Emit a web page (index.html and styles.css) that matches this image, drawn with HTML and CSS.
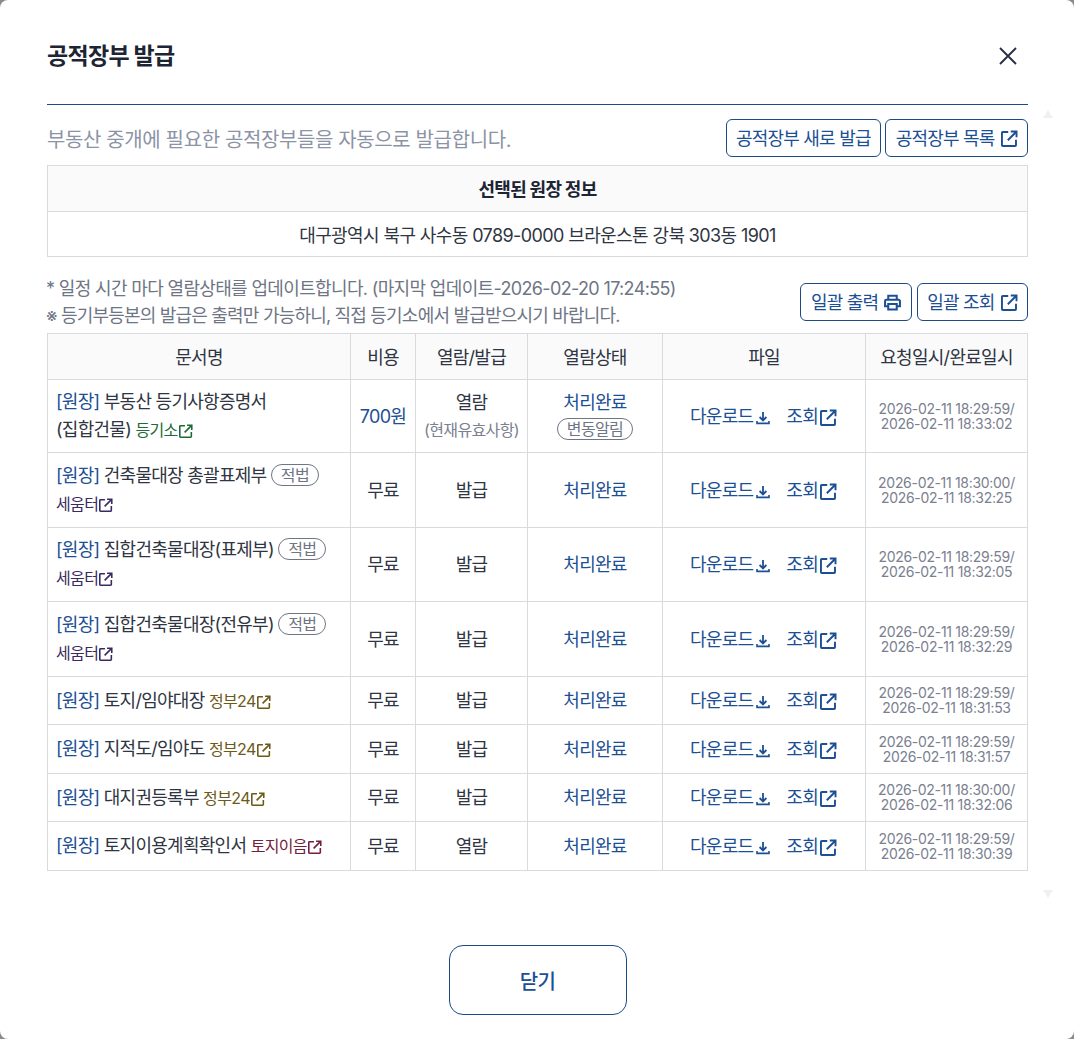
FILE: index.html
```html
<!DOCTYPE html>
<html lang="ko">
<head>
<meta charset="utf-8">
<title>공적장부 발급</title>
<link rel="stylesheet" href="styles.css">
</head>
<body>
<svg class="defs" width="0" height="0" aria-hidden="true">
  <symbol id="ext" viewBox="0 0 16 16">
    <path d="M6.8 1.9H1.7a.8.8 0 0 0-.8.8v11.6a.8.8 0 0 0 .8.8h11.6a.8.8 0 0 0 .8-.8V9.2" fill="none" stroke="currentColor" stroke-width="1.8"/>
    <path d="M6.4 9.6 14.4 1.6M9.2 1.4h5.4v5.4" fill="none" stroke="currentColor" stroke-width="1.8"/>
  </symbol>
  <symbol id="down" viewBox="0 0 14 14">
    <path d="M7 1v8M3.6 6 7 9.4 10.4 6" fill="none" stroke="currentColor" stroke-width="1.8"/>
    <path d="M1 10v2.4h12V10" fill="none" stroke="currentColor" stroke-width="1.6"/>
  </symbol>
  <symbol id="print" viewBox="0 0 16 16">
    <path d="M4 5.5V1.6h8v3.9" fill="none" stroke="currentColor" stroke-width="1.9"/>
    <path d="M4 11.6H1V6.6a1.2 1.2 0 0 1 1.2-1.2h11.6a1.2 1.2 0 0 1 1.2 1.2v5H12" fill="none" stroke="currentColor" stroke-width="1.9"/>
    <path d="M4 9.4h8v5.2H4z" fill="none" stroke="currentColor" stroke-width="1.9"/>
  </symbol>
</svg>

<div class="modal">
  <header class="modal-head">
    <h1 class="modal-title">공적장부 발급</h1>
    <button class="close" type="button" aria-label="닫기">
      <svg width="20" height="20" viewBox="0 0 20 20"><path d="M2 2l16 16M18 2 2 18" fill="none" stroke="currentColor" stroke-width="1.9"/></svg>
    </button>
  </header>

  <div class="modal-body">
    <span class="scroll-arrow up"></span>
    <span class="scroll-arrow down"></span>

    <div class="intro">
      <p class="intro-text">부동산 중개에 필요한 공적장부들을 자동으로 발급합니다.</p>
      <div class="btns">
        <button class="btn" type="button">공적장부 새로 발급</button>
        <button class="btn" type="button">공적장부 목록 <svg class="i-btn"><use href="#ext"/></svg></button>
      </div>
    </div>

    <table class="info">
      <tr><th>선택된 원장 정보</th></tr>
      <tr><td>대구광역시 북구 사수동 0789-0000 브라운스톤 강북 303동 1901</td></tr>
    </table>

    <div class="notice">
      <div class="notes">
        <p>* 일정 시간 마다 열람상태를 업데이트합니다. (마지막 업데이트-2026-02-20 17:24:55)</p>
        <p>※ 등기부등본의 발급은 출력만 가능하니, 직접 등기소에서 발급받으시기 바랍니다.</p>
      </div>
      <div class="btns wide">
        <button class="btn" type="button">일괄 출력 <svg class="i-btn"><use href="#print"/></svg></button>
        <button class="btn" type="button">일괄 조회 <svg class="i-btn"><use href="#ext"/></svg></button>
      </div>
    </div>

    <table class="docs">
      <colgroup>
        <col class="c1"><col class="c2"><col class="c3"><col class="c4"><col class="c5"><col class="c6">
      </colgroup>
      <thead>
        <tr><th>문서명</th><th>비용</th><th>열람/발급</th><th>열람상태</th><th>파일</th><th>요청일시/완료일시</th></tr>
      </thead>
      <tbody>
        <tr class="r-first">
          <td class="name"><span class="tag">[원장]</span> 부동산 등기사항증명서<br>(집합건물) <a class="src green">등기소<svg class="i-src"><use href="#ext"/></svg></a></td>
          <td class="price">700원</td>
          <td>열람<br><span class="sub">(현재유효사항)</span></td>
          <td><span class="done">처리완료</span><br><span class="pill pill-status">변동알림</span></td>
          <td class="files"><a>다운로드<svg class="i-file"><use href="#down"/></svg></a><a>조회<svg class="i-view"><use href="#ext"/></svg></a></td>
          <td class="date">2026-02-11 18:29:59/<br>2026-02-11 18:33:02</td>
        </tr>
        <tr class="r-two">
          <td class="name"><span class="tag">[원장]</span> 건축물대장 총괄표제부 <span class="pill">적법</span><br><a class="src purple">세움터<svg class="i-src"><use href="#ext"/></svg></a></td>
          <td>무료</td><td>발급</td><td><span class="done">처리완료</span></td>
          <td class="files"><a>다운로드<svg class="i-file"><use href="#down"/></svg></a><a>조회<svg class="i-view"><use href="#ext"/></svg></a></td>
          <td class="date">2026-02-11 18:30:00/<br>2026-02-11 18:32:25</td>
        </tr>
        <tr class="r-two">
          <td class="name"><span class="tag">[원장]</span> 집합건축물대장(표제부) <span class="pill">적법</span><br><a class="src purple">세움터<svg class="i-src"><use href="#ext"/></svg></a></td>
          <td>무료</td><td>발급</td><td><span class="done">처리완료</span></td>
          <td class="files"><a>다운로드<svg class="i-file"><use href="#down"/></svg></a><a>조회<svg class="i-view"><use href="#ext"/></svg></a></td>
          <td class="date">2026-02-11 18:29:59/<br>2026-02-11 18:32:05</td>
        </tr>
        <tr class="r-two">
          <td class="name"><span class="tag">[원장]</span> 집합건축물대장(전유부) <span class="pill">적법</span><br><a class="src purple">세움터<svg class="i-src"><use href="#ext"/></svg></a></td>
          <td>무료</td><td>발급</td><td><span class="done">처리완료</span></td>
          <td class="files"><a>다운로드<svg class="i-file"><use href="#down"/></svg></a><a>조회<svg class="i-view"><use href="#ext"/></svg></a></td>
          <td class="date">2026-02-11 18:29:59/<br>2026-02-11 18:32:29</td>
        </tr>
        <tr class="r-one">
          <td class="name"><span class="tag">[원장]</span> 토지/임야대장 <a class="src olive">정부24<svg class="i-src"><use href="#ext"/></svg></a></td>
          <td>무료</td><td>발급</td><td><span class="done">처리완료</span></td>
          <td class="files"><a>다운로드<svg class="i-file"><use href="#down"/></svg></a><a>조회<svg class="i-view"><use href="#ext"/></svg></a></td>
          <td class="date">2026-02-11 18:29:59/<br>2026-02-11 18:31:53</td>
        </tr>
        <tr class="r-one">
          <td class="name"><span class="tag">[원장]</span> 지적도/임야도 <a class="src olive">정부24<svg class="i-src"><use href="#ext"/></svg></a></td>
          <td>무료</td><td>발급</td><td><span class="done">처리완료</span></td>
          <td class="files"><a>다운로드<svg class="i-file"><use href="#down"/></svg></a><a>조회<svg class="i-view"><use href="#ext"/></svg></a></td>
          <td class="date">2026-02-11 18:29:59/<br>2026-02-11 18:31:57</td>
        </tr>
        <tr class="r-one">
          <td class="name"><span class="tag">[원장]</span> 대지권등록부 <a class="src olive">정부24<svg class="i-src"><use href="#ext"/></svg></a></td>
          <td>무료</td><td>발급</td><td><span class="done">처리완료</span></td>
          <td class="files"><a>다운로드<svg class="i-file"><use href="#down"/></svg></a><a>조회<svg class="i-view"><use href="#ext"/></svg></a></td>
          <td class="date">2026-02-11 18:30:00/<br>2026-02-11 18:32:06</td>
        </tr>
        <tr class="r-one">
          <td class="name"><span class="tag">[원장]</span> 토지이용계획확인서 <a class="src wine">토지이음<svg class="i-src"><use href="#ext"/></svg></a></td>
          <td>무료</td><td>열람</td><td><span class="done">처리완료</span></td>
          <td class="files"><a>다운로드<svg class="i-file"><use href="#down"/></svg></a><a>조회<svg class="i-view"><use href="#ext"/></svg></a></td>
          <td class="date">2026-02-11 18:29:59/<br>2026-02-11 18:30:39</td>
        </tr>
      </tbody>
    </table>
  </div>

  <footer class="modal-foot">
    <button class="btn-close" type="button">닫기</button>
  </footer>
</div>
</body>
</html>
```

FILE: styles.css
```css
* { box-sizing: border-box; }
html, body { margin: 0; height: 100%; overflow: hidden; }
body {
  background: #8a8a8a;
  font-family: "Inter", "Noto Sans CJK KR", sans-serif;
  color: #2f3542;
  font-size: 18px;
  letter-spacing: -0.72px;
}
.defs { position: absolute; }
p { margin: 0; }
a { color: inherit; }
button { font: inherit; letter-spacing: inherit; background: #fff; cursor: pointer; }

.modal {
  height: 1039px;
  background: #fff;
  border-radius: 8px;
  padding: 0 46px 0 47px;
  display: flex;
  flex-direction: column;
}
.modal-head {
  height: 105px;
  padding-top: 6px;
  border-bottom: 1px solid #1b4a86;
  display: flex;
  align-items: center;
  justify-content: space-between;
}
.modal-title {
  margin: 0 0 2px;
  font-size: 23px;
  font-weight: 700;
  color: #1d2433;
  letter-spacing: -0.7px;
}
.close {
  border: 0;
  padding: 0;
  margin: 2px 10px 0 0;
  width: 20px;
  height: 20px;
  color: #2a3040;
  background: none;
}
.modal-body {
  position: relative;
  padding-top: 14px;
  height: 800px;
}
.scroll-arrow {
  position: absolute;
  left: 996px;
  width: 0;
  height: 0;
  border-left: 5px solid transparent;
  border-right: 5px solid transparent;
}
.scroll-arrow.up { top: 5px; border-bottom: 8px solid #eff0f1; }
.scroll-arrow.down { top: 785px; border-top: 8px solid #eff0f1; }

.intro {
  display: flex;
  justify-content: space-between;
  align-items: center;
  height: 38px;
  margin-bottom: 8px;
}
.intro-text { font-size: 20px; color: #8b93a5; letter-spacing: -0.38px; }
.btns { display: flex; gap: 4px; }
.btns.wide { gap: 5px; }
.btn {
  height: 38px;
  padding: 0 9.5px 3px;
  border: 1px solid #1b4a86;
  border-radius: 6px;
  color: #1c4f94;
  letter-spacing: -0.8px;
  display: flex;
  align-items: center;
  gap: 6px;
  white-space: nowrap;
}
.i-btn { width: 17px; height: 17px; margin-top: 3px; }

table { border-collapse: collapse; width: 100%; table-layout: fixed; }
th, td { border: 1px solid #d8dade; text-align: center; font-weight: 400; }

.info th { height: 46px; padding-bottom: 3px; background: #fafafa; font-weight: 700; color: #1d2433; }
.info td { height: 45px; padding-bottom: 2px; letter-spacing: -0.6px; }

.notice {
  display: flex;
  justify-content: space-between;
  align-items: center;
  margin-top: 18px;
  margin-bottom: 4px;
}
.notes { line-height: 27px; color: #6e7585; letter-spacing: -0.65px; margin-left: -1px; }
.notes p { white-space: nowrap; }
.notes p + p { letter-spacing: -0.8px; }

.c1 { width: 303px; } .c2 { width: 65px; } .c3 { width: 112px; }
.c4 { width: 135px; } .c5 { width: 203px; } .c6 { width: 162px; }

.docs th { height: 46px; padding-bottom: 2px; background: #fafafa; }
.docs td { padding: 0; line-height: 27px; }
.r-first { height: 73px; }
.r-two { height: 74.5px; }
.r-one { height: 48.5px; }
.docs .r-two td, .docs .r-one td { padding-top: 1px; }

.docs .name { text-align: left; padding-left: 8px; line-height: 28px; }
.docs .r-two .name { padding-top: 0; }
.tag { color: #1c4f94; }
.price { color: #1c4f94; }
.sub { display: inline-block; font-size: 16px; line-height: 22px; letter-spacing: -0.64px; color: #7a8090; }
.done { color: #1c4f94; }
.pill {
  display: inline-block;
  height: 22px;
  line-height: 20px;
  padding: 0 9px;
  font-size: 16px;
  letter-spacing: -0.64px;
  color: #6e7585;
  border: 1px solid #6e7585;
  border-radius: 11px;
  vertical-align: 1px;
}
.src { font-size: 16px; letter-spacing: -0.64px; }
.green { color: #1d6b35; }
.purple { color: #3a2a62; }
.olive { color: #6b5a18; }
.wine { color: #74203c; }
.i-src { width: 14px; height: 14px; margin-left: 1px; vertical-align: -2px; }

.docs .files { color: #1c4f94; white-space: nowrap; padding: 1px 1px 0 0; }
.files a + a { margin-left: 16px; }
.i-file { width: 14px; height: 14px; margin-left: 3px; vertical-align: -2px; }
.i-view { width: 17px; height: 17px; margin-left: 2px; vertical-align: -3px; }
.docs .date { font-size: 14px; line-height: 15px; color: #7a8090; letter-spacing: -0.3px; white-space: nowrap; }
.docs .r-two .date, .docs .r-one .date { padding-top: 0; }

.modal-foot { display: flex; justify-content: center; padding-top: 40px; }
.btn-close {
  width: 178px;
  height: 70px;
  border: 1px solid #1b4a86;
  border-radius: 14px;
  color: #1c4f94;
  font-size: 20px;
  font-weight: 500;
}
```
